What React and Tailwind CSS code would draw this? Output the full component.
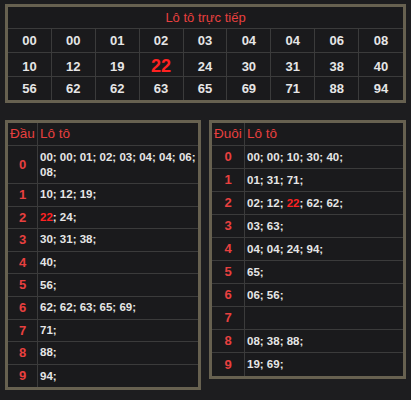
const top = [
  ['00', '00', '01', '02', '03', '04', '04', '06', '08'],
  ['10', '12', '19', '22', '24', '30', '31', '38', '40'],
  ['56', '62', '62', '63', '65', '69', '71', '88', '94'],
];

const dau = [
  ['00', '00', '01', '02', '03', '04', '04', '06', '08'],
  ['10', '12', '19'],
  ['22', '24'],
  ['30', '31', '38'],
  ['40'],
  ['56'],
  ['62', '62', '63', '65', '69'],
  ['71'],
  ['88'],
  ['94'],
];

const duoi = [
  ['00', '00', '10', '30', '40'],
  ['01', '31', '71'],
  ['02', '12', '22', '62', '62'],
  ['03', '63'],
  ['04', '04', '24', '94'],
  ['65'],
  ['06', '56'],
  [],
  ['08', '38', '88'],
  ['19', '69'],
];

function Nums({ list }) {
  return list.map((n, i) => (
    <span key={i}>
      <span className={n === '22' ? 'text-[#ff2222]' : ''}>{n}</span>;{' '}
    </span>
  ));
}

function Panel({ label, rows, firstW, rowH, width }) {
  return (
    <div className={`border-[3px] border-[#676150] bg-[#1a1a1c] ${width}`}>
      <div className="flex h-[23px] border-b border-[#3b3b3b] text-[13.5px] text-[#e8403f]">
        <div className={`${firstW} shrink-0 flex items-center justify-center border-r border-[#3b3b3b]`}>{label}</div>
        <div className="flex items-center pl-[2px]">Lô tô</div>
      </div>
      {rows.map((list, i) => (
        <div key={i} className={`flex ${i === 0 && list.length > 8 ? 'min-h-[38px]' : rowH} border-b border-[#3b3b3b] last:border-b-0`}>
          <div className={`${firstW} shrink-0 flex items-center justify-center border-r border-[#3b3b3b] text-[13px] font-bold text-[#e8403f]`}>{i}</div>
          <div className="flex-1 flex items-center pl-[2px] py-[3px] text-[11.5px] font-bold leading-[15px] text-[#e6e6e6]">
            <div><Nums list={list} /></div>
          </div>
        </div>
      ))}
    </div>
  );
}

export default function App() {
  return (
    <div className="w-[411px] h-[400px] bg-[#1d1d1f] font-['Liberation_Sans',Arial,sans-serif] pt-[4px] px-[5px]">
      {/* Bảng lô tô */}
      <div className="border-[3px] border-[#676150] bg-[#1a1a1c]">
        <div className="h-[22px] flex items-center justify-center border-b border-[#3b3b3b] text-[13px] text-[#e8403f]">
          Lô tô trực tiếp
        </div>
        {top.map((row, r) => (
          <div key={r} className={`grid grid-cols-9 ${r === 2 ? 'h-[23px]' : 'h-[24px] border-b border-[#3b3b3b]'}`}>
            {row.map((n, c) => (
              <div key={c} className={`flex items-center justify-center font-bold ${c < 8 ? 'border-r border-[#3b3b3b]' : ''} ${n === '22' ? 'text-[18px] text-[#ff2222]' : 'text-[13px] text-[#e6e6e6]'}`}>
                {n}
              </div>
            ))}
          </div>
        ))}
      </div>

      <div className="flex items-start justify-between mt-[17px]">
        <Panel label="Đầu" rows={dau} firstW="w-[30px]" rowH="h-[22.6px]" width="w-[196px]" />
        <Panel label="Đuôi" rows={duoi} firstW="w-[33px]" rowH="h-[23px]" width="w-[197px]" />
      </div>
    </div>
  );
}
